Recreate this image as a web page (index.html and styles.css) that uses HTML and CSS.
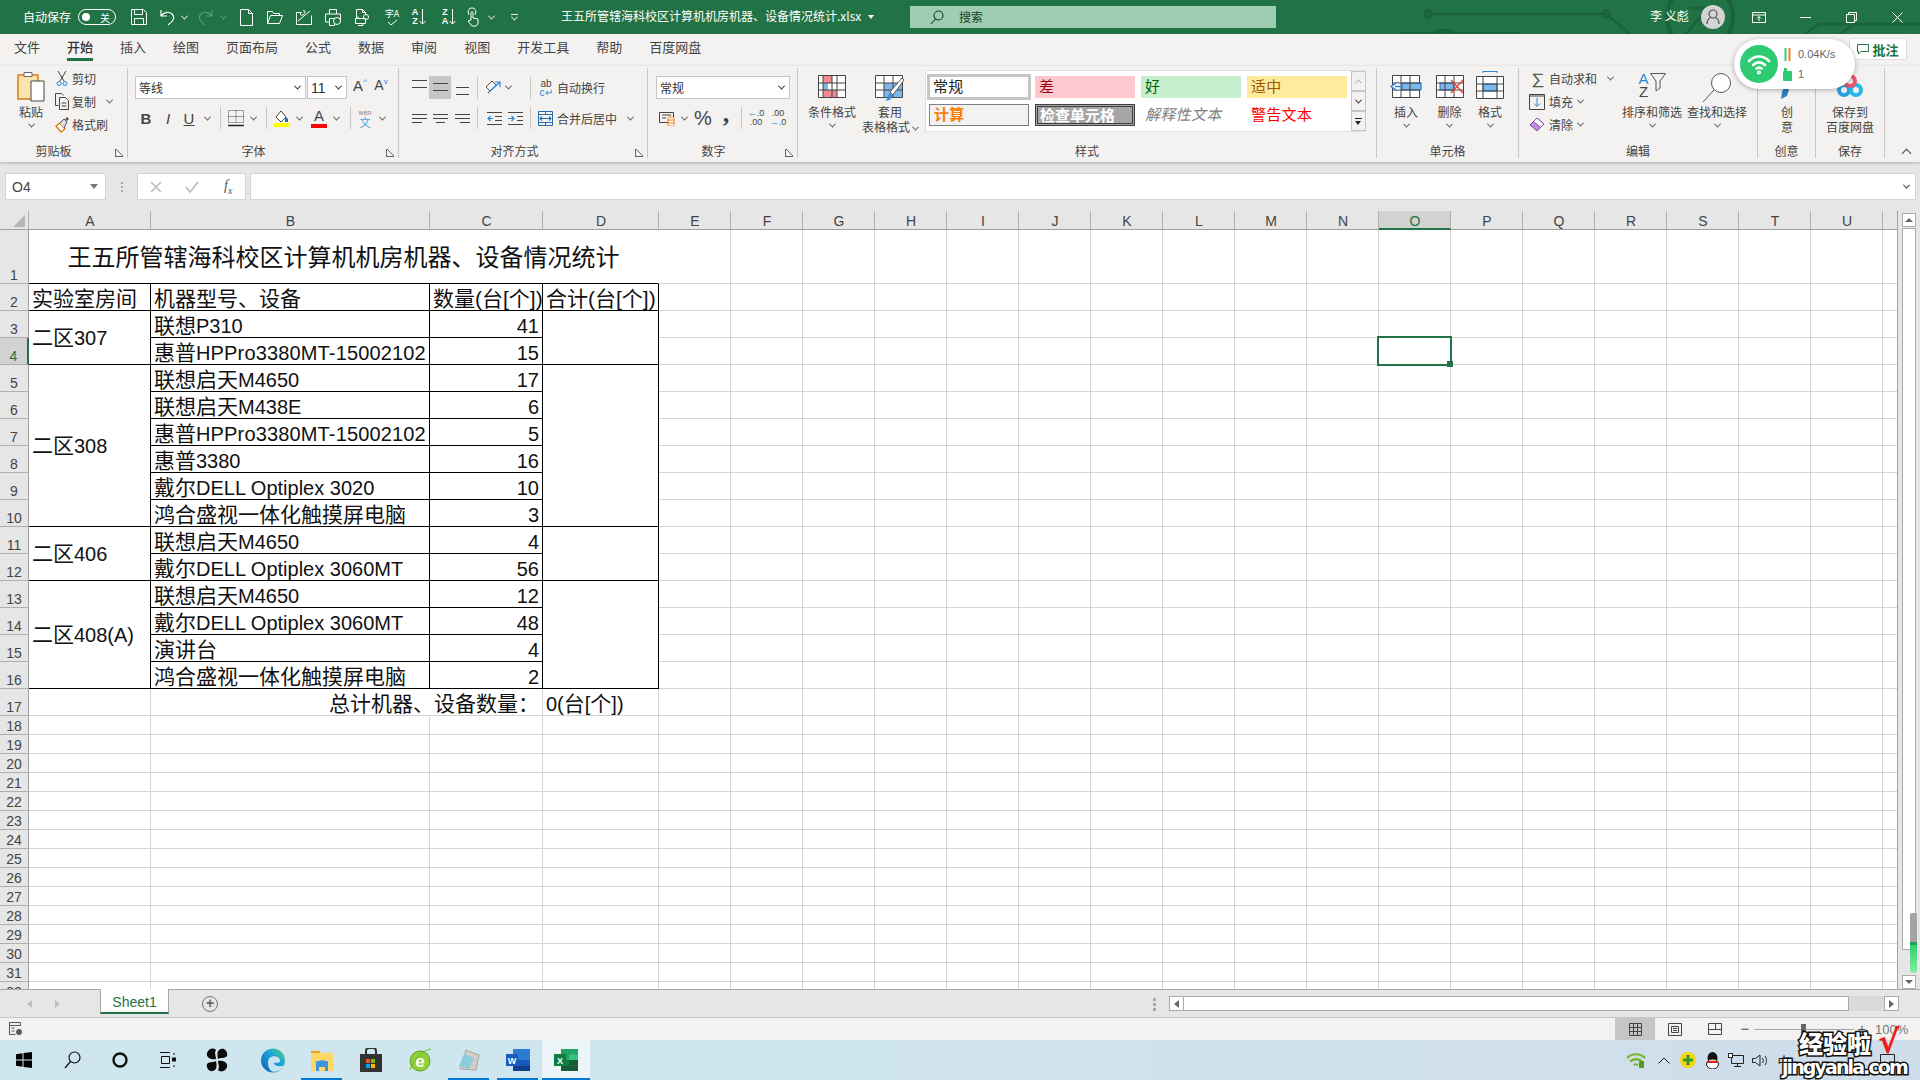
FILE: index.html
```html
<!DOCTYPE html>
<html lang="zh-CN">
<head>
<meta charset="utf-8">
<title>王五所管辖海科校区计算机机房机器、设备情况统计.xlsx - Excel</title>
<link rel="stylesheet" href="styles.css">
</head>
<body>
<div class="app">
<header class="titlebar">
  <svg class="circuit" width="520" height="34" viewBox="0 0 520 34" fill="none" stroke="#1b6239" stroke-width="2.5"><path d="M27 14H206l24 20M0 33H120"/><circle cx="28" cy="14" r="3.5"/><circle cx="206" cy="14" r="3.5"/><circle cx="44" cy="48" r="18"/><circle cx="300" cy="17" r="33" stroke-width="4"/><path d="M290 8h18v18M308 8l-22 26"/><path d="M405 34l14-10h101M440 34l12-8"/></svg>
  <span class="autosave">自动保存</span>
  <span class="toggle"><i class="knob"></i><b>关</b></span>
  <span class="qa ml12 w22"><svg width="16" height="16" viewBox="0 0 16 16" fill="none" stroke="#fff"><path d="M.5.500h12l3 3v12H.5z M3.500.5v5h8v-5M3.500 15.500v-6h9v6"/></svg></span>
  <span class="qa ml7 w22"><svg width="16" height="17" viewBox="0 0 16 17" fill="none" stroke="#fff" stroke-width="1.2"><path d="M1 1v6h6M1 7c3-4 8-5 11-2 3 3 2 7-4 11"/></svg></span>
  <span class="qa w10"><i class="chev light"></i></span>
  <span class="qa ml5 w22 dim"><svg width="16" height="17" viewBox="0 0 16 17" fill="none" stroke="#5f9a7a" stroke-width="1.2"><path d="M15 1v6H9M15 7c-3-4-8-5-11-2-3 3-2 7 4 11"/></svg></span>
  <span class="qa ml2 w10 dim"><i class="chev dimc"></i></span>
  <span class="qa ml7 w22"><svg width="13" height="17" viewBox="0 0 13 17" fill="none" stroke="#fff"><path d="M.5.500h8l4 4v12H.5zM8.500.5v4h4"/></svg></span>
  <span class="qa ml7 w22"><svg width="16" height="13" viewBox="0 0 16 13" fill="none" stroke="#fff"><path d="M.5 12.500V.5h5l1 2h6v2M.5 12.500h12l3-8H3.500z"/></svg></span>
  <span class="qa ml7 w22"><svg width="17" height="15" viewBox="0 0 17 15" fill="none" stroke="#fff"><path d="M.5 2.500h5M.5 2.500v12h15v-9M2 11L14 1M5 2c-2 4 2 4 3 2S10 0 7 1"/></svg></span>
  <span class="qa ml7 w22"><svg width="17" height="17" viewBox="0 0 17 17" fill="none" stroke="#fff"><path d="M4.500 5V.5h7V5M.5 5h15v8h-4M4.500 13H.5V5M4.500 9.500h5v7h-5z"/><circle cx="12" cy="12" r="3.500" fill="#217346"/></svg></span>
  <span class="qa ml7 w22"><svg width="15" height="17" viewBox="0 0 15 17" fill="none" stroke="#fff"><path d="M1.500 9V.5h6l3 3V6M7.500.5v3h3M.5 9.500h10v5H.5zM3 9.500v-2M3 16.500h5v-2"/><circle cx="11" cy="8" r="2.500"/></svg></span>
  <span class="qa ml8 w22 spell"><span class="mini">字A</span><svg width="11" height="7" viewBox="0 0 11 7" fill="none" stroke="#fff"><path d="M1 3l3 3 6-5"/></svg></span>
  <span class="qa ml5 w22 sortq"><span class="az">A<br>Z</span><svg width="7" height="16" viewBox="0 0 7 16" fill="none" stroke="#fff"><path d="M3.500 0v15M.5 12l3 3 3-3"/></svg></span>
  <span class="qa ml8 w22 sortq"><span class="az">Z<br>A</span><svg width="7" height="16" viewBox="0 0 7 16" fill="none" stroke="#fff"><path d="M3.500 0v15M.5 12l3 3 3-3"/></svg></span>
  <span class="qa ml2 w22"><svg width="12" height="20" viewBox="0 0 12 20" fill="none" stroke="#fff"><path d="M2 8C0 3 2 1 5 1s5 2 3 7M4 6c0-2 2-2 2 0v5l5 1v5l-2 2H5l-4-5 3-1z"/></svg></span>
  <span class="qa ml2 w10"><i class="chev light"></i></span>
  <span class="qa ml13 w10 custom"><i class="bar"></i><i class="chev light"></i></span>
  <span class="doc-title">王五所管辖海科校区计算机机房机器、设备情况统计.xlsx</span>
  <span class="caret-wrap"><i class="caret"></i></span>
  <div class="search"><svg width="14" height="15" viewBox="0 0 14 15" fill="none" stroke="#173f2a" stroke-width="1.100"><circle cx="8.500" cy="5.500" r="4.500"/><path d="M5.500 9L1 14"/></svg><span>搜索</span></div>
  <span class="user">李 义彪</span>
  <span class="avatar"><svg width="14" height="16" viewBox="0 0 14 16" fill="none" stroke="#555" stroke-width="1.200"><circle cx="7" cy="5" r="4"/><path d="M1 15c0-4 2.500-6 4-6.500M13 15c0-4-2.500-6-4-6.500"/></svg></span>
  <span class="win first"><svg width="14" height="11" viewBox="0 0 14 11" fill="none" stroke="#fff"><path d="M.5.500h13v10H.5zM.5 3h13M7 9V4.500M5 6.500l2-2 2 2"/></svg></span>
  <span class="win"><svg width="11" height="1" viewBox="0 0 11 1"><path d="M0 .5h11" stroke="#fff"/></svg></span>
  <span class="win"><svg width="11" height="11" viewBox="0 0 11 11" fill="none" stroke="#fff"><path d="M.5 2.500h8v8h-8zM2.500 2.500v-2h8v8h-2"/></svg></span>
  <span class="win"><svg width="11" height="11" viewBox="0 0 11 11" fill="none" stroke="#fff"><path d="M.5.500l10 10M10.500.500l-10 10"/></svg></span>
</header>

<nav class="tabs">
  <span>文件</span><span class="active">开始</span><span>插入</span><span>绘图</span><span>页面布局</span><span>公式</span><span>数据</span><span>审阅</span><span>视图</span><span>开发工具</span><span>帮助</span><span>百度网盘</span>
</nav>

<section class="ribbon">
  <div class="grp g-clip">
    <div class="body clip-body">
      <div class="big w30">
        <div class="big-ic"><svg width="28" height="31" viewBox="0 0 28 31"><path d="M1 4h20v24H1z" fill="#fbe3b0" stroke="#d87b10" stroke-width="1.500"/><path d="M7 1.500h8v4H7z" fill="#fff" stroke="#666"/><path d="M14 10h13v20H14z" fill="#fff" stroke="#444"/></svg></div>
        <span>粘贴</span><i class="chev"></i>
      </div>
      <div class="stack clip-rows">
        <div class="srow"><span class="s-ic"><svg width="12" height="17" viewBox="0 0 12 17" fill="none" stroke="#444"><path d="M2 1l6 10M10 1L4 11"/><circle cx="3" cy="13.500" r="2" stroke="#2b88d8"/><circle cx="9" cy="13.500" r="2" stroke="#2b88d8"/></svg></span><span>剪切</span></div>
        <div class="srow"><span class="s-ic"><svg width="14" height="17" viewBox="0 0 14 17" fill="none" stroke="#444"><path d="M.5.500h6l2 2M.5.500v12h3M4.500 4.500h6l3 3v9h-9zM6.500 10h5M6.500 13h5"/></svg></span><span>复制</span><span class="s-ch"><i class="chev"></i></span></div>
        <div class="srow"><span class="s-ic"><svg width="15" height="17" viewBox="0 0 15 17"><path d="M1 10l5 6 4-3-5-6z" fill="#fff" stroke="#d87b10" stroke-width="1.400"/><path d="M5 7l4-4 3 3-3 6" fill="#ddd" stroke="#555"/><path d="M10 3l2-2 2 2-2 2" fill="#555"/></svg></span><span>格式刷</span></div>
      </div>
    </div>
    <div class="lbl">剪贴板</div><i class="launch"></i>
  </div>

  <div class="grp g-font">
    <div class="body two">
      <div class="row1">
        <div class="combo w171"><span>等线</span><i class="chev dark"></i></div>
        <div class="combo w40 ml1"><span class="latin">11</span><i class="chev dark"></i></div>
        <span class="tb w18 ml4 growa">A<sup>^</sup></span>
        <span class="tb w16 ml4 growb">A<sup>v</sup></span>
      </div>
      <div class="row2">
        <span class="tb w22 fb">B</span><span class="tb w22 fi">I</span><span class="tb w20 fu">U</span><span class="tb w16"><i class="chev"></i></span>
        <i class="sep sx5"></i>
        <span class="tb w20"><svg width="16" height="17" viewBox="0 0 16 17" fill="none"><path d="M.5.500h15v12H.5zM8 .5v12M.5 6.500h15" stroke="#444" stroke-dasharray="1 1"/><path d="M0 15.500h16" stroke="#222" stroke-width="1.500"/></svg></span><span class="tb w14"><i class="chev"></i></span>
        <i class="sep sx6"></i>
        <span class="tb w18"><svg width="16" height="17" viewBox="0 0 16 17"><path d="M7 1L2 7l5 5 5-5z" fill="#fff" stroke="#444"/><path d="M11 6l3 3v3h-3z" fill="#2b6cb0"/><rect y="13" width="16" height="4" fill="#ffff00"/></svg></span><span class="tb w16"><i class="chev"></i></span>
        <span class="tb w16 ml4 fcolor"><span>A</span><i></i></span><span class="tb w18"><i class="chev"></i></span>
        <i class="sep sx5"></i>
        <span class="tb w18 wen"><span>wén</span><b>文</b></span><span class="tb w16"><i class="chev"></i></span>
      </div>
    </div>
    <div class="lbl">字体</div><i class="launch"></i>
  </div>

  <div class="grp g-align">
    <div class="body two">
      <div class="row1">
        <span class="tb w20"><i class="lines top"></i></span>
        <span class="tb w22 hl"><i class="lines mid"></i></span>
        <span class="tb w22"><i class="lines bot"></i></span>
        <i class="sep sl4 sr5"></i>
        <span class="tb w20"><svg width="17" height="17" viewBox="0 0 17 17" fill="none"><path d="M1 8l6-6 4 4-6 6z" stroke="#555"/><path d="M3 14L15 3M10 3h5v5" stroke="#2b88d8" stroke-width="1.200"/></svg></span>
        <span class="tb w10"><i class="chev"></i></span>
        <i class="sep sl17 sr5"></i>
        <span class="tb w20 wrap-ic"><span>ab</span><span class="blue">c↵</span></span>
        <span class="rtext ml1">自动换行</span>
      </div>
      <div class="row2">
        <span class="tb w20"><i class="lines left"></i></span>
        <span class="tb w22"><i class="lines cen"></i></span>
        <span class="tb w22"><i class="lines right"></i></span>
        <i class="sep sl4 sr5"></i>
        <span class="tb w22"><svg width="15" height="13" viewBox="0 0 15 13" fill="none"><path d="M0 .5h15M8 4.500h7M8 8.500h7M0 12.500h15" stroke="#444"/><path d="M6 6.500H1M3.500 4l-2.500 2.500L3.500 9" stroke="#2b88d8" stroke-width="1.200"/></svg></span>
        <span class="tb w21"><svg width="15" height="13" viewBox="0 0 15 13" fill="none"><path d="M0 .5h15M9 4.500h6M9 8.500h6M0 12.500h15" stroke="#444"/><path d="M0 6.500h6M3.500 4L6 6.500 3.500 9" stroke="#2b88d8" stroke-width="1.200"/></svg></span>
        <i class="sep sl4 sr5"></i>
        <span class="tb w18"><svg width="15" height="15" viewBox="0 0 15 15" fill="none" stroke="#2b6cb0"><path d="M.5.500h14v14H.5zM.5 3.500h14M.5 11.500h14M7.500 11.500v3M7.500.5v3"/><path d="M2 7.500h11M4 5.500l-2 2 2 2M11 5.500l2 2-2 2" stroke-width="1.100"/></svg></span>
        <span class="rtext ml3">合并后居中</span>
        <span class="tb w16 ml5"><i class="chev"></i></span>
      </div>
    </div>
    <div class="lbl">对齐方式</div><i class="launch"></i>
  </div>

  <div class="grp g-num">
    <div class="body two">
      <div class="row1"><div class="combo w134"><span>常规</span><i class="chev dark"></i></div></div>
      <div class="row2">
        <span class="tb w22"><svg width="16" height="16" viewBox="0 0 16 16" fill="none"><path d="M.5 2.500h14v10H.5zM3 5h9M3 8h4" stroke="#444"/><rect x="9" y="7" width="6" height="9" rx="1.500" fill="#fff" stroke="#e87a10"/><path d="M9 10h6M9 13h6" stroke="#e87a10"/></svg></span>
        <span class="tb w12"><i class="chev"></i></span>
        <span class="tb w26 pct">%</span>
        <span class="tb w20 comma">,</span>
        <i class="sep sl5"></i>
        <span class="tb w28 dec"><span><em>←</em>.0</span><span>.00</span></span>
        <span class="tb w16 dec"><span>.00</span><span><em>→</em>.0</span></span>
      </div>
    </div>
    <div class="lbl">数字</div><i class="launch"></i>
  </div>

  <div class="grp g-style">
    <div class="body style-body">
      <div class="big w56">
        <div class="big-ic"><svg class="top2" width="28" height="23" viewBox="0 0 28 23"><path d="M.5.500h27v22H.5z" fill="#fff" stroke="#444"/><rect x="5" y="1" width="9" height="7" fill="#f38a8f"/><rect x="5" y="8" width="5" height="7" fill="#7db8e8"/><rect x="5" y="15" width="14" height="7" fill="#f38a8f"/><path d="M5 .5v22M14 .5v22M19 .5v22M.5 8h27M.5 15h27" stroke="#444" fill="none"/></svg></div>
        <span>条件格式</span><i class="chev"></i>
      </div>
      <div class="big w60">
        <div class="big-ic"><svg class="top2" width="30" height="27" viewBox="0 0 30 27"><path d="M.5.500h27v22H.5z" fill="#fff" stroke="#444"/><rect x="9" y="8" width="18" height="14" fill="#7db8e8"/><path d="M9 .5v22M18 .5v22M.5 8h27M.5 15h27" stroke="#444" fill="none"/><path d="M27 3L15 17l3 3L29 5z" fill="#fff" stroke="#555"/><path d="M15 18l3 3-3 4-5 1c3-2 2-6 5-8z" fill="#4a90d9"/></svg></div>
        <span>套用</span><span class="inl">表格格式<i class="chev"></i></span>
      </div>
      <div class="gallery">
        <div class="cells">
          <span class="cs normal">常规</span><span class="cs bad">差</span><span class="cs good">好</span><span class="cs neutral">适中</span>
          <span class="cs calc">计算</span><span class="cs check">检查单元格</span><span class="cs expl">解释性文本</span><span class="cs warn">警告文本</span>
        </div>
        <div class="gscroll"><span class="g1"><i class="chev up grey"></i></span><span class="g2"><i class="chev dark"></i></span><span class="g3"><i class="more"></i></span></div>
      </div>
    </div>
    <div class="lbl">样式</div>
  </div>

  <div class="grp g-cell">
    <div class="body cell-body">
      <div class="big w40">
        <div class="big-ic"><svg class="top2" width="32" height="23" viewBox="0 0 32 23"><path d="M2.500.500h27v22h-27z" fill="#fff" stroke="#444"/><rect x="12" y="8" width="19" height="7" fill="#7db8e8" stroke="#1f6bb0"/><path d="M11 .5v22M20 .5v22M2.500 8H30M2.500 15H30" stroke="#444" fill="none"/><path d="M12 11.500H5M8 7l-7 4.500L8 16" fill="#fff" stroke="#2b88d8" stroke-width="1.300"/></svg></div>
        <span>插入</span><i class="chev"></i>
      </div>
      <div class="big w47">
        <div class="big-ic"><svg class="top2" width="28" height="23" viewBox="0 0 28 23"><path d="M.5.500h27v22H.5z" fill="#fff" stroke="#444"/><rect x="4" y="8" width="14" height="7" fill="#7db8e8" stroke="#1f6bb0"/><path d="M9 .5v22M18 .5v22M.5 8h27M.5 15h27" stroke="#444" fill="none"/><path d="M15 5l12 13M27 5L15 18" stroke="#e8412f" stroke-width="1.300" fill="none"/></svg></div>
        <span>删除</span><i class="chev"></i>
      </div>
      <div class="big w34">
        <div class="big-ic"><svg class="topm2" width="28" height="28" viewBox="0 0 28 28"><path d="M7 .5h14M7 0v2M21 0v2" stroke="#2b88d8" fill="none"/><path d="M.5 5.500h27v22H.5z" fill="#fff" stroke="#444"/><rect x="7" y="13" width="14" height="7" fill="#7db8e8" stroke="#1f6bb0"/><path d="M7 5.500v22M21 5.500v22M.5 13h27M.5 20h27" stroke="#444" fill="none"/></svg></div>
        <span>格式</span><i class="chev"></i>
      </div>
    </div>
    <div class="lbl">单元格</div>
  </div>

  <div class="grp g-edit">
    <div class="body edit-body">
      <div class="stack edit-rows">
        <div class="srow"><span class="s-ic sigma">∑</span><span>自动求和</span><span class="s-ch e1"><i class="chev"></i></span></div>
        <div class="srow"><span class="s-ic"><svg width="16" height="16" viewBox="0 0 16 16" fill="none"><path d="M.5.500h15v15H.5zM.5 2h15" stroke="#444"/><path d="M8 4v8M5 9.500l3 3 3-3" stroke="#2b88d8"/></svg></span><span>填充</span><span class="s-ch e2"><i class="chev"></i></span></div>
        <div class="srow"><span class="s-ic"><svg width="16" height="15" viewBox="0 0 16 15"><path d="M1 8l7-7 7 6-7 7z" fill="#c08ad8" stroke="#8a4aa8"/><path d="M4.500 4.500l7 6 3.500-3.500-7-6z" fill="#fff" stroke="#8a4aa8"/></svg></span><span>清除</span><span class="s-ch e2"><i class="chev"></i></span></div>
      </div>
      <div class="big w58">
        <div class="big-ic sort-ic"><span class="sa">A<br><b>Z</b></span><svg width="16" height="19" viewBox="0 0 16 19" fill="none" stroke="#555"><path d="M.5.500h15L10 8v7l-4 3V8z"/></svg></div>
        <span>排序和筛选</span><i class="chev"></i>
      </div>
      <div class="big w72">
        <div class="big-ic"><svg width="30" height="30" viewBox="0 0 30 30" fill="none" stroke="#555"><circle cx="19" cy="10" r="9.500" fill="#fff"/><path d="M12 17L1 29"/></svg></div>
        <span>查找和选择</span><i class="chev"></i>
      </div>
    </div>
    <div class="lbl">编辑</div>
  </div>

  <div class="grp g-cre">
    <div class="body cc-body">
      <div class="big w58">
        <div class="big-ic"><svg class="pen" width="14" height="30" viewBox="0 0 14 30"><path d="M11 0l3 1-7 24-6 3 1-7z" fill="#2b7fc4"/></svg></div>
        <span>创</span><span>意</span>
      </div>
    </div>
    <div class="lbl">创意</div>
  </div>

  <div class="grp g-save">
    <div class="body cc-body">
      <div class="big w68">
        <div class="big-ic"><svg class="baidu" width="28" height="24" viewBox="0 0 28 24" fill="none" stroke-width="4"><circle cx="8" cy="16" r="5" stroke="#2a9fe0"/><circle cx="20" cy="16" r="5" stroke="#29b6e8"/><circle cx="14" cy="7" r="5" stroke="#ec5570"/></svg></div>
        <span>保存到</span><span>百度网盘</span>
      </div>
    </div>
    <div class="lbl">保存</div>
  </div>
  <i class="collapse"></i>
</section>

<aside class="net-pop">
  <span class="wifi-circle"><svg width="24" height="22" viewBox="0 0 24 22" fill="none" stroke="#fff" stroke-width="2.600" stroke-linecap="round"><path d="M2 8c6-6 14-6 20 0M6 12c4-3.500 8-3.500 12 0M9.500 15.500c2-1.500 3-1.500 5 0"/><circle cx="12" cy="19.500" r=".8"/></svg></span>
  <span class="net-info">
    <span class="ni"><svg width="9" height="13" viewBox="0 0 9 13"><path d="M2.500 0v13" stroke="#2ecb73" stroke-width="2"/><path d="M6.500 0v13" stroke="#f08020" stroke-width="2"/></svg>0.04K/s</span>
    <span class="ni"><svg width="9" height="13" viewBox="0 0 9 13"><rect y="3" width="9" height="10" rx="1" fill="#2ecb73"/><rect x="1" width="3" height="3" fill="#2ecb73"/></svg>1</span>
  </span>
</aside>
<button class="comment"><svg width="12" height="11" viewBox="0 0 12 11" fill="none" stroke="#217346"><path d="M.5.500h11v7H4L1.500 10V7.500h-1z"/></svg>批注</button>

<section class="fbar">
  <div class="namebox"><span>O4</span><i class="tri"></i></div>
  <span class="vdots"><i></i><i></i><i></i></span>
  <div class="fxbox">
    <svg width="12" height="12" viewBox="0 0 12 12" fill="none" stroke="#bdbdbd" stroke-width="1.600"><path d="M1 1l10 10M11 1L1 11"/></svg>
    <svg width="14" height="12" viewBox="0 0 14 12" fill="none" stroke="#bdbdbd" stroke-width="1.800"><path d="M1 6l4 5 8-10"/></svg>
    <span class="fx">f<sub>x</sub></span>
  </div>
  <div class="formula"><i class="chev dark"></i></div>
</section>

<section class="sheet">
  <div class="grid-wrap">
    <div class="col-heads">
      <span class="corner"><i></i></span>
      <span class="ca">A</span><span class="cb">B</span><span class="cc">C</span><span class="cd">D</span>
      <span>E</span><span>F</span><span>G</span><span>H</span><span>I</span><span>J</span><span>K</span><span>L</span><span>M</span><span>N</span><span class="sel">O</span><span>P</span><span>Q</span><span>R</span><span>S</span><span>T</span><span>U</span><span class="cv"></span>
    </div>
    <table class="grid">
      <colgroup><col class="k0"><col class="k1"><col class="k2"><col class="k3"><col class="k4"><col class="k5"></colgroup>
      <tbody>
        <tr class="h54"><th>1</th><td colspan="4" class="title">王五所管辖海科校区计算机机房机器、设备情况统计</td><td class="r"></td></tr>
        <tr><th>2</th><td class="b">实验室房间</td><td class="b">机器型号、设备</td><td class="b">数量(台[个])</td><td class="b">合计(台[个])</td><td class="r"></td></tr>
        <tr><th>3</th><td rowspan="2" class="b m">二区<span class="lt">307</span></td><td class="b">联想<span class="lt">P310</span></td><td class="b n">41</td><td rowspan="2" class="b"></td><td class="r"></td></tr>
        <tr><th class="cur">4</th><td class="b">惠普<span class="lt wide">HPPro3380MT-15002102</span></td><td class="b n">15</td><td class="r"></td></tr>
        <tr><th>5</th><td rowspan="6" class="b m">二区<span class="lt">308</span></td><td class="b">联想启天<span class="lt">M4650</span></td><td class="b n">17</td><td rowspan="6" class="b"></td><td class="r"></td></tr>
        <tr><th>6</th><td class="b">联想启天<span class="lt">M438E</span></td><td class="b n">6</td><td class="r"></td></tr>
        <tr><th>7</th><td class="b">惠普<span class="lt wide">HPPro3380MT-15002102</span></td><td class="b n">5</td><td class="r"></td></tr>
        <tr><th>8</th><td class="b">惠普<span class="lt">3380</span></td><td class="b n">16</td><td class="r"></td></tr>
        <tr><th>9</th><td class="b">戴尔<span class="lt">DELL Optiplex 3020</span></td><td class="b n">10</td><td class="r"></td></tr>
        <tr><th>10</th><td class="b">鸿合盛视一体化触摸屏电脑</td><td class="b n">3</td><td class="r"></td></tr>
        <tr><th>11</th><td rowspan="2" class="b m">二区<span class="lt">406</span></td><td class="b">联想启天<span class="lt">M4650</span></td><td class="b n">4</td><td rowspan="2" class="b"></td><td class="r"></td></tr>
        <tr><th>12</th><td class="b">戴尔<span class="lt">DELL Optiplex 3060MT</span></td><td class="b n">56</td><td class="r"></td></tr>
        <tr><th>13</th><td rowspan="4" class="b m">二区<span class="lt">408(A)</span></td><td class="b">联想启天<span class="lt">M4650</span></td><td class="b n">12</td><td rowspan="4" class="b"></td><td class="r"></td></tr>
        <tr><th>14</th><td class="b">戴尔<span class="lt">DELL Optiplex 3060MT</span></td><td class="b n">48</td><td class="r"></td></tr>
        <tr><th>15</th><td class="b">演讲台</td><td class="b n">4</td><td class="r"></td></tr>
        <tr><th>16</th><td class="b">鸿合盛视一体化触摸屏电脑</td><td class="b n">2</td><td class="r"></td></tr>
        <tr><th>17</th><td></td><td colspan="2" class="total">总计机器、设备数量：</td><td><span class="lt">0(</span>台<span class="lt">[</span>个<span class="lt">])</span></td><td class="r"></td></tr>
        <tr class="h19"><th>18</th><td></td><td></td><td></td><td></td><td class="r"></td></tr>
        <tr class="h19"><th>19</th><td></td><td></td><td></td><td></td><td class="r"></td></tr>
        <tr class="h19"><th>20</th><td></td><td></td><td></td><td></td><td class="r"></td></tr>
        <tr class="h19"><th>21</th><td></td><td></td><td></td><td></td><td class="r"></td></tr>
        <tr class="h19"><th>22</th><td></td><td></td><td></td><td></td><td class="r"></td></tr>
        <tr class="h19"><th>23</th><td></td><td></td><td></td><td></td><td class="r"></td></tr>
        <tr class="h19"><th>24</th><td></td><td></td><td></td><td></td><td class="r"></td></tr>
        <tr class="h19"><th>25</th><td></td><td></td><td></td><td></td><td class="r"></td></tr>
        <tr class="h19"><th>26</th><td></td><td></td><td></td><td></td><td class="r"></td></tr>
        <tr class="h19"><th>27</th><td></td><td></td><td></td><td></td><td class="r"></td></tr>
        <tr class="h19"><th>28</th><td></td><td></td><td></td><td></td><td class="r"></td></tr>
        <tr class="h19"><th>29</th><td></td><td></td><td></td><td></td><td class="r"></td></tr>
        <tr class="h19"><th>30</th><td></td><td></td><td></td><td></td><td class="r"></td></tr>
        <tr class="h19"><th>31</th><td></td><td></td><td></td><td></td><td class="r"></td></tr>
        <tr class="h19"><th>32</th><td></td><td></td><td></td><td></td><td class="r"></td></tr>
      </tbody>
    </table>
    <div class="cursor"><i></i></div>
  </div>
  <div class="vscroll">
    <span class="sbtn"><i class="tri-up"></i></span>
    <div class="vtrack"><div class="vthumb"></div></div>
    <span class="sbtn"><i class="tri-down"></i></span>
    <i class="meter"></i>
  </div>
</section>

<section class="tabbar">
  <span class="nav"><i class="tl"></i></span><span class="nav n2"><i class="tr"></i></span>
  <span class="sheet-tab">Sheet1</span>
  <span class="add">+</span>
  <span class="split"><i></i><i></i><i></i></span>
  <div class="hscroll">
    <span class="hbtn"><i class="tl dark"></i></span>
    <div class="hthumb"></div>
    <span class="hbtn last"><i class="tr dark"></i></span>
  </div>
</section>

<footer class="status">
  <svg class="macro" width="14" height="14" viewBox="0 0 14 14" fill="none" stroke="#555"><path d="M.5.500h11v3H.5zM.5 3.500v9h6M2.500 6h3M2.500 9h3"/><circle cx="10" cy="10" r="3.500" fill="#555" stroke="#f3f2f1"/></svg>
  <span class="view on"><svg width="13" height="13" viewBox="0 0 13 13" fill="none" stroke="#444"><path d="M.5.500h12v12H.5zM4.500.5v12M8.500.5v12M.5 4.500h12M.5 8.500h12"/></svg></span>
  <span class="view"><svg width="14" height="13" viewBox="0 0 14 13" fill="none" stroke="#444"><path d="M.5.500h13v12H.5zM3.500 3.500h7v6h-7zM5 5.500h4M5 7.500h4"/></svg></span>
  <span class="view"><svg width="14" height="12" viewBox="0 0 14 12" fill="none" stroke="#444"><path d="M.5.500h13v11H.5zM7.500.5v6h-7M7.500 6.500h6"/></svg></span>
  <span class="zm">−</span>
  <span class="slider"><i></i></span>
  <span class="zm">+</span>
  <span class="pctz">100%</span>
</footer>

<div class="taskbar">
  <span class="tk"><svg width="16" height="16" viewBox="0 0 16 16" fill="#000"><path d="M0 2.200l6.500-1v6.300H0zM7.500 1L16 0v7.500H7.500zM0 8.500h6.500v6.300l-6.500-1zM7.500 8.500H16V16l-8.500-1.100z"/></svg></span>
  <span class="tk"><svg width="17" height="18" viewBox="0 0 17 18" fill="none" stroke="#111" stroke-width="1.200"><circle cx="10.500" cy="6.500" r="5.500"/><path d="M6.500 10.500L1 17"/></svg></span>
  <span class="tk"><svg width="16" height="16" viewBox="0 0 16 16" fill="none" stroke="#111" stroke-width="2.400"><circle cx="8" cy="8" r="6.500"/></svg></span>
  <span class="tk"><svg width="16" height="16" viewBox="0 0 16 16" fill="none" stroke="#111"><path d="M0 .5h10M0 15.500h10M1.500 4.500h8v7h-8zM14 1v2M14 13v2"/><rect x="12.500" y="6" width="3" height="3" fill="#111"/></svg></span>
  <span class="tk w50"><svg width="22" height="25" viewBox="0 0 22 25" fill="#0c0c0c"><path d="M10 11C4 12 0 9 1 5c1-4 6-6 9-3-2 3 0 6 0 9zM12 11c-1-5-1-9 3-10 4-1 7 3 6 7-3 3-6 1-9 3zM12 13c6-1 10 2 9 6-1 4-6 6-9 3 2-3 0-6 0-9zM10 13c1 5 1 9-3 10-4 1-7-3-6-7 3-3 6-1 9-3z"/></svg></span>
  <span class="tk ml6"><svg width="24" height="29" viewBox="0 0 24 24"><defs><linearGradient id="eg" x1="0" y1="1" x2="1" y2="0"><stop offset="0" stop-color="#0b5fb8"/><stop offset=".6" stop-color="#1ea2de"/><stop offset="1" stop-color="#5ed66a"/></linearGradient></defs><circle cx="12" cy="12" r="12" fill="url(#eg)"/><path d="M7 14c0-5 4-7 8-6 4 1 5 5 3 6-2 1-5 0-5 0 0 3 4 5 10 3-3 6-9 7-12 6-3-2-4-5-4-9z" fill="#d0e8f1" opacity=".95"/></svg></span>
  <span class="tk w49 run"><svg width="22" height="21" viewBox="0 0 22 21"><path d="M0 1h8l2 2h12v18H0z" fill="#ffd767"/><path d="M0 1h8l2 2H0z" fill="#e8a317"/><path d="M5 12h12v9h-3v-4H8v4H5z" fill="#3a96dd"/><path d="M3 12l8-2 8 2z" fill="#3a96dd"/></svg></span>
  <span class="tk w49"><svg width="22" height="24" viewBox="0 0 22 24"><rect y="6" width="22" height="18" fill="#333"/><path d="M6 8V3a3 3 0 013-3h4a3 3 0 013 3v5" fill="none" stroke="#333" stroke-width="2"/><rect x="6" y="11" width="4" height="4" fill="#f25022"/><rect x="11" y="11" width="4" height="4" fill="#7fba00"/><rect x="6" y="16" width="4" height="4" fill="#00a4ef"/><rect x="11" y="16" width="4" height="4" fill="#ffb900"/></svg></span>
  <span class="tk w49"><svg width="24" height="24" viewBox="0 0 24 24"><circle cx="12" cy="13" r="10" fill="#8ed03a" stroke="#5fa820"/><text x="12" y="19" text-anchor="middle" class="tk-e">e</text><path d="M2 22C4 14 14 2 23 1" fill="none" stroke="#6dbb22"/></svg></span>
  <span class="tk w49 run"><svg width="22" height="23" viewBox="0 0 22 23"><path d="M8 1l13 5-3 15L2 20z" fill="#cfcfc8" stroke="#a8a8a0"/><path d="M6 5l10 4-5 11-10-3z" fill="#8ccbdc"/></svg></span>
  <span class="tk w49 run"><svg width="24" height="22" viewBox="0 0 24 22"><rect x="7" width="17" height="22" fill="#2b7cd3"/><rect x="7" y="11" width="17" height="5.500" fill="#185abd"/><rect x="7" y="16.500" width="17" height="5.500" fill="#103f91"/><rect y="5" width="12" height="12" fill="#185abd"/><text x="6" y="15" text-anchor="middle" class="tk-l">W</text></svg></span>
  <span class="tk act"><svg width="24" height="22" viewBox="0 0 24 22"><rect x="7" width="17" height="22" fill="#21a366"/><rect x="15" y="5.500" width="9" height="5.500" fill="#33c481"/><rect x="7" y="11" width="8" height="5.500" fill="#107c41"/><rect x="15" y="11" width="9" height="5.500" fill="#185c37"/><rect x="7" y="16.500" width="17" height="5.500" fill="#185c37"/><rect y="5" width="12" height="12" fill="#107c41"/><text x="6" y="15" text-anchor="middle" class="tk-l">X</text></svg></span>
  <div class="tray">
    <span class="ti wifi-t"><svg width="20" height="16" viewBox="0 0 20 16" fill="none" stroke="#79b82e" stroke-width="2.200"><path d="M1 6c5-5 13-5 18 0M4 9.500c4-3 8-3 12 0M8 13c1-1 2-1 4 0"/><rect x="13" y="9" width="5" height="7" rx="1" fill="#4f9a1e" stroke="none"/></svg></span>
    <span class="ti"><svg width="12" height="7" viewBox="0 0 12 7" fill="none" stroke="#222"><path d="M.5 6.500L6 1l5.500 5.500"/></svg></span>
    <span class="ti"><svg width="16" height="16" viewBox="0 0 16 16"><circle cx="8" cy="8" r="8" fill="#f5d515"/><path d="M8 3v10M3 8h10" stroke="#2f9a2a" stroke-width="3"/></svg></span>
    <span class="ti"><svg width="15" height="17" viewBox="0 0 15 17"><ellipse cx="7.500" cy="6" rx="5" ry="6" fill="#111"/><ellipse cx="7.500" cy="12" rx="6" ry="5" fill="#fff" stroke="#111"/><path d="M2 9h11v2H2z" fill="#e02020"/><path d="M5.500 8h4l-2 1.500z" fill="#f5b015"/></svg></span>
    <span class="ti"><svg width="16" height="14" viewBox="0 0 16 14" fill="none" stroke="#222"><path d="M3.500 2.500h12v8h-12zM9.500 10.500v3M6 13.500h7"/><rect x=".5" y=".5" width="4" height="4" fill="#fff"/></svg></span>
    <span class="ti"><svg width="16" height="13" viewBox="0 0 16 13" fill="none" stroke="#222"><path d="M.5 4.500h3L8 1v11L3.500 8.500h-3zM10.500 4c1 1.500 1 3.500 0 5M13 2c2 3 2 6 0 9"/></svg></span>
    <span class="ti ime">中</span>
    <span class="clock">2020/11/8</span>
    <span class="notif"><svg width="15" height="13" viewBox="0 0 15 13" fill="none" stroke="#222"><path d="M.5.500h14v9h-6l-2 3v-3h-6z"/></svg></span>
  </div>
</div>

<div class="watermark"><span class="wm-cn">经验啦</span><span class="wm-ok">√</span><span class="wm-en">jingyanla.com</span></div>
</div>
</body>
</html>
```

FILE: styles.css
```css
*{box-sizing:border-box}
html,body{margin:0;padding:0;overflow:hidden}
body{font-family:"Noto Sans CJK SC","Noto Sans",sans-serif;color:#444;font-size:12px;background:#f3f2f1}
i{font-style:normal}
.app{position:relative;width:1920px;height:1080px;overflow:hidden;display:flex;flex-direction:column}

/* title bar */
.titlebar{position:relative;height:34px;background:#217346;color:#fff;display:flex;align-items:center;padding-left:23px;flex:none}
.circuit{position:absolute;right:0;top:0}
.titlebar>*:not(.circuit){position:relative}
.autosave{width:48px;font-size:12px;white-space:nowrap;padding-bottom:2px}
.toggle{margin-left:7px;width:38px;height:16px;border:1px solid #fff;border-radius:8px;display:flex;align-items:center;justify-content:space-between;padding:0 5px 0 3px}
.toggle b{font-weight:400;font-size:10px}
.knob{width:8px;height:8px;border-radius:50%;background:#fff}
.qa{height:22px;display:inline-flex;align-items:center;justify-content:center;flex:none}
.ml1{margin-left:1px}.ml2{margin-left:2px}.ml3{margin-left:3px}.ml4{margin-left:4px}.ml5{margin-left:5px}.ml6{margin-left:6px}.ml7{margin-left:7px}.ml8{margin-left:8px}.ml12{margin-left:12px}.ml13{margin-left:13px}
.w10{width:10px}.w12{width:12px}.w14{width:14px}.w16{width:16px}.w18{width:18px}.w20{width:20px}.w21{width:21px}.w22{width:22px}.w26{width:26px}.w28{width:28px}.w30{width:30px}.w34{width:34px}.w40{width:40px}.w47{width:47px}.w49{width:49px}.w50{width:50px}.w56{width:56px}.w58{width:58px}.w60{width:60px}.w68{width:68px}.w72{width:72px}.w134{width:134px}.w171{width:171px}
.chev{display:inline-block;width:5px;height:5px;border-right:1px solid #555;border-bottom:1px solid #555;transform:rotate(45deg) translate(-1px,-1px)}
.chev.light{border-color:#dfeee6}.chev.dimc{border-color:#5f9a7a}.chev.dark{border-color:#222}
.chev.up{transform:rotate(225deg) translate(-1px,-1px)}.chev.grey{border-color:#aaa}
.spell{flex-direction:column;line-height:1}
.mini{font-size:9px;line-height:10px}
.sortq{gap:1px}
.az{font:700 9px/9px "Liberation Sans",sans-serif;text-align:center}
.custom{flex-direction:column;gap:1px}
.custom .bar{width:7px;height:1px;background:#dfeee6}
.doc-title{margin-left:42px;width:300px;white-space:nowrap;font-size:12px;flex:none;padding-bottom:3px}
.caret-wrap{width:20px;display:flex;justify-content:center;flex:none}
.caret{width:0;height:0;border:3px solid transparent;border-top:4px solid #fff;border-bottom:0}
.search{margin-left:29px;width:366px;height:22px;background:#9fcdb3;display:flex;align-items:center;padding-left:20px;color:#173f2a;font-size:12px;flex:none}
.search span{margin-left:15px;padding-bottom:2px}
.user{margin-left:auto;width:40px;white-space:nowrap;font-size:12px;padding-bottom:3px}
.avatar{margin-left:11px;width:24px;height:24px;border-radius:50%;background:#d4d4d4;display:flex;align-items:center;justify-content:center}
.win{width:46px;height:34px;display:flex;align-items:center;justify-content:center;flex:none}
.win.first{margin-left:11px}

/* tabs */
.tabs{height:32px;flex:none;display:flex;gap:27px;padding:0 0 6px 14px;align-items:center;font-size:13px;background:#f3f2f1;color:#444}
.tabs span{position:relative;line-height:26px}
.tabs .active{font-weight:500;color:#333}
.tabs .active::after{content:"";position:absolute;left:0;right:0;bottom:-1px;height:3px;background:#217346}

/* ribbon */
.ribbon{position:relative;height:96px;flex:none;display:flex;padding-top:2px;background:#f3f2f1;box-shadow:0 1px 3px rgba(0,0,0,.25);z-index:2}
.grp{position:relative;height:90px;border-right:1px solid #c8c6c4;display:flex;flex-direction:column;flex:none}
.body{height:76px;display:flex}
.lbl{height:14px;line-height:14px;text-align:center;font-size:12px;color:#444;white-space:nowrap}
.g-clip .lbl{padding-right:20px}.g-font .lbl{padding-right:19px}.g-align .lbl{padding-right:17px}.g-num .lbl{padding-right:18px}
.launch{position:absolute;right:4px;bottom:1px;width:8px;height:8px;border-left:1px solid #666;border-bottom:1px solid #666;background:linear-gradient(45deg,transparent 45%,#666 45% 55%,transparent 55%)}
.g-clip{width:128px}.g-font{width:271px}.g-align{width:249px}.g-num{width:150px}.g-style{width:579px}.g-cell{width:142px}.g-edit{width:239px}.g-cre{width:58px}.g-save{width:69px}
.big{display:flex;flex-direction:column;align-items:center;line-height:15px;flex:none;white-space:nowrap;font-size:12px}
.big-ic{height:31px;flex:none;display:flex;justify-content:center;margin-top:5px}
.big .chev{margin-top:4px}
.top2{margin-top:2px}.topm2{margin-top:-2px}
.inl{display:flex;gap:3px;align-items:center}
.stack{display:flex;flex-direction:column}
.srow{height:23px;display:flex;align-items:center;white-space:nowrap}
.s-ic{display:inline-flex;align-items:center;justify-content:center;flex:none}
.clip-body{padding-left:16px}
.clip-body .big .big-ic{margin-top:3px;height:33px}
.clip-rows{margin-left:7px;margin-top:-1px}
.clip-rows .s-ic{width:18px;margin-right:1px}
.s-ch{margin-left:9px;display:inline-flex;width:8px;justify-content:center}
.two{display:flex;flex-direction:column;padding-top:8px}
.row1,.row2{display:flex;align-items:center;flex:none}
.row1{height:23px}
.row2{height:22px;margin-top:8px}
.g-font .two{padding-left:7px}
.g-align .two{padding-left:10px}
.g-num .two{padding-left:8px}
.tb{height:22px;display:inline-flex;align-items:center;justify-content:center;flex:none;color:#444}
.combo{height:23px;background:#fff;border:1px solid #c8c6c4;display:flex;align-items:center;justify-content:space-between;padding:0 5px 0 3px;color:#333;flex:none;font-size:12px}
.latin{font-family:"Liberation Sans",sans-serif;font-size:14px}
.growa,.growb{font:15px "Liberation Sans",sans-serif;align-items:flex-start}
.growb{font-size:14px}
.growa sup,.growb sup{font-size:8px;color:#2b88d8;line-height:10px}
.fb,.fi,.fu{font:15px "Liberation Sans",sans-serif}
.fb{font-weight:700}.fi{font-style:italic}.fu{text-decoration:underline}
.sep{width:1px;height:22px;background:#c8c6c4;flex:none}
.sx5{margin:0 5px}.sx6{margin:0 6px}
.sl4{margin-left:4px}.sr5{margin-right:5px}.sl5{margin-left:5px}.sl17{margin-left:17px}
.fcolor{flex-direction:column;font:15px/13px "Liberation Sans",sans-serif}
.fcolor i{width:16px;height:4px;background:#f00;margin-top:2px}
.wen{flex-direction:column;line-height:9px;color:#888}
.wen span{font:7px/8px "Liberation Sans",sans-serif}
.wen b{font-weight:400;font-size:11px;line-height:11px;color:#4a9ed8}
.lines{display:block;width:15px;height:1px;position:relative;background:#444}
.lines::before,.lines::after{content:"";position:absolute;height:1px;background:#444;left:0;width:15px}
.lines.top{transform:translateY(-7px)}.lines.top::before{display:none}.lines.top::after{top:7px}
.lines.mid{transform:translateY(-4px)}.lines.mid::before{display:none}.lines.mid::after{top:7px}
.lines.bot{width:13px;transform:translateY(0)}.lines.bot::before{display:none}.lines.bot::after{top:7px;width:13px}
.lines.left::before{top:-4px}.lines.left::after{top:4px;width:10px}
.lines.cen::before{top:-4px}.lines.cen::after{top:4px;left:3px;width:9px}
.lines.right::before{top:-4px}.lines.right::after{top:4px;left:5px;width:10px}
.hl{background:#c8c6c4;height:23px}
.rtext{font-size:12px;white-space:nowrap;flex:none}
.wrap-ic{flex-direction:column;font:10px/9px "Liberation Sans",sans-serif}
.blue{color:#2b88d8}
.pct{font:20px "Liberation Sans",sans-serif}
.comma{font:700 26px/14px "Liberation Serif",serif;align-items:flex-start}
.dec{flex-direction:column;font:9px/9px "Liberation Sans",sans-serif;align-items:center;white-space:nowrap}
.dec em{font-style:normal;color:#2b88d8;font-weight:700}
.style-body{padding-left:6px}
.gallery{margin-left:5px;margin-top:2px;width:441px;height:62px;display:flex;flex:none;background:#fff;border:1px solid #e1dfdd}
.cells{width:426px;display:grid;grid-template-columns:repeat(4,100px);grid-auto-rows:22px;column-gap:6px;row-gap:6px;padding:5px 0 0 3px;flex:none}
.cs{display:flex;align-items:center;padding:0 0 3px 4px;font-size:15px;white-space:nowrap;letter-spacing:.3px;overflow:hidden}
.normal{outline:3px solid #c8c6c4;outline-offset:-1px;color:#222}
.bad{background:#ffc7ce;color:#9c0006}
.good{background:#c6efce;color:#006100}
.neutral{background:#ffeb9c;color:#9c5700}
.calc{background:#f2f2f2;border:1px solid #7f7f7f;color:#fa7d00;font-weight:700}
.check{background:#a5a5a5;border:3px double #3f3f3f;color:#fff;font-weight:700;padding-left:2px;padding-bottom:1px;letter-spacing:0}
.expl{color:#7f7f7f;font-style:italic}
.warn{color:#f00}
.gscroll{width:15px;display:flex;flex-direction:column;flex:none;margin-left:-1px}
.gscroll span{flex:1;border:1px solid #c8c6c4;background:#f3f2f1;display:flex;align-items:center;justify-content:center}
.more{width:7px;height:6px;border-top:1px solid #222;position:relative}
.more::after{content:"";position:absolute;left:0;top:2px;border:3.500px solid transparent;border-top:4px solid #222;border-bottom:0}
.cell-body{padding-left:9px}
.edit-body{padding-left:10px}
.edit-rows{width:94px;flex:none;margin-top:-1px}
.edit-rows .s-ic{width:20px;justify-content:flex-start}
.sigma{font-size:18px;line-height:18px;color:#555}
.e1{margin-left:9px}.e2{margin-left:3px}
.sort-ic{gap:1px}
.sa{font:15px/13px "Liberation Sans",sans-serif;color:#2b88d8;text-align:center;margin-top:-1px}
.sa b{font-weight:400;color:#444}
.pen{margin-top:-2px}
.baidu{margin-top:1px}
.collapse{position:absolute;right:10px;bottom:5px;width:7px;height:7px;border-left:1px solid #444;border-top:1px solid #444;transform:rotate(45deg)}

/* floating */
.net-pop{position:absolute;z-index:5;left:1734px;top:39px;width:121px;height:50px;border-radius:25px;background:#fff;box-shadow:0 1px 5px rgba(0,0,0,.3);display:flex;align-items:center;padding-left:6px}
.wifi-circle{width:38px;height:38px;border-radius:50%;background:#2ecb73;display:flex;align-items:center;justify-content:center;flex:none}
.net-info{margin-left:5px;display:flex;flex-direction:column;gap:4px}
.ni{display:flex;align-items:center;gap:6px;font:11px/16px "Liberation Sans",sans-serif;color:#666}
.comment{position:absolute;z-index:4;left:1849px;top:38px;width:58px;height:22px;border:1px solid #e1dfdd;background:#fff;border-radius:2px;color:#217346;font:700 13px "Noto Sans CJK SC",sans-serif;display:flex;align-items:center;justify-content:center;gap:3px;padding:0}

/* formula bar */
.fbar{height:49px;flex:none;background:#e6e6e6;display:flex;padding:11px 4px 0 5px;align-items:flex-start}
.namebox,.fxbox,.formula{height:27px;background:#fff;border:1px solid #d4d4d4;display:flex;align-items:center;flex:none}
.namebox{width:101px;justify-content:space-between;padding:0 7px 0 6px;font:14px "Liberation Sans",sans-serif;color:#444}
.tri{border:4px solid transparent;border-top:5px solid #777;border-bottom:0}
.vdots{width:31px;display:flex;flex-direction:column;align-items:center;gap:2px;height:27px;justify-content:center}
.vdots i{width:2px;height:2px;background:#aaa}
.fxbox{width:109px;padding-left:12px;gap:23px}
.fx{font:italic 14px "Liberation Serif",serif;color:#555;margin-left:2px}
.fx sub{font-size:10px}
.formula{margin-left:4px;width:1666px;justify-content:flex-end;padding-right:6px}

/* sheet */
.sheet{position:relative;height:779px;flex:none;display:flex;background:#e6e6e6;overflow:hidden;border-bottom:1px solid #a6a6a6}
.grid-wrap{position:relative;width:1898px;height:778px;overflow:hidden;flex:none;background:#fff;border-right:1px solid #a0a0a0}
.col-heads{height:19px;display:flex;background:#e6e6e6;border-bottom:1px solid #a0a0a0}
.col-heads span{width:72px;flex:none;border-right:1px solid #b0b0b0;text-align:center;font:14px/21px "Liberation Sans",sans-serif;color:#444;overflow:hidden;padding-left:1px}
.col-heads .corner{width:29px;position:relative;border-right:1px solid #b0b0b0}
.corner i{position:absolute;right:3px;bottom:2px;border-style:solid;border-width:0 0 12px 12px;border-color:transparent transparent #b5b5b5 transparent}
.col-heads .ca{width:122px}.col-heads .cb{width:279px}.col-heads .cc{width:113px}.col-heads .cd{width:116px}
.col-heads .cv{width:15px;border:0}
.col-heads .sel{background:#d2d2d2;color:#217346;border-bottom:2px solid #217346;height:19px}
.grid{border-collapse:separate;border-spacing:0;table-layout:fixed;width:1898px;font:21px/22px "Liberation Sans","Noto Sans CJK SC",sans-serif;color:#111}
.k0{width:29px}.k1{width:122px}.k2{width:279px}.k3{width:113px}.k4{width:116px}.k5{width:1239px}
.grid tr{height:27px}
.grid tr.h54{height:54px}
.grid tr.h19{height:19px}
.grid th{background:#e6e6e6;border-right:1px solid #a0a0a0;border-bottom:1px solid #b0b0b0;font:400 14px/15px "Liberation Sans",sans-serif;color:#444;padding:0;vertical-align:bottom;text-align:center}
.grid th.cur{background:#d2d2d2;color:#217346;border-right:2px solid #217346}
.grid td{padding:0 3px;border-right:1px solid #d4d4d4;border-bottom:1px solid #d4d4d4;white-space:nowrap;overflow:hidden;vertical-align:bottom;line-height:22px}
.grid .lt{font-size:20px}
.grid .wide{letter-spacing:.15px}
.grid tr.h19 td{line-height:1px;font-size:1px}
.grid td.b{border-right-color:#000;border-bottom-color:#000}
.grid td.m{vertical-align:middle}
.grid td.n{text-align:right;font-size:20px}
.grid td.title{font-size:24px;line-height:30px;text-align:center;vertical-align:middle;border-right-color:transparent;border-bottom-color:#000;padding-top:2px}
.grid td.total{text-align:right;padding-right:3px}
.grid td.r{padding:0;border-right:0;background:repeating-linear-gradient(90deg,transparent 0 71px,#d4d4d4 71px 72px)}
.cursor{position:absolute;left:1377px;top:125px;width:75px;height:30px;border:2px solid #217346}
.cursor i{position:absolute;right:-3px;bottom:-3px;width:6px;height:6px;background:#217346}
.vscroll{position:relative;width:22px;flex:none;display:flex;flex-direction:column;align-items:center;padding-top:2px}
.sbtn{width:14px;height:14px;background:#fff;border:1px solid #ababab;display:flex;align-items:center;justify-content:center;flex:none}
.tri-up{border:4px solid transparent;border-bottom:4px solid #666;border-top:0}
.tri-down{border:4px solid transparent;border-top:4px solid #666;border-bottom:0}
.vtrack{flex:1;width:14px}
.vthumb{width:14px;height:722px;margin-top:1px;background:#fff;border:1px solid #ababab;border-top-width:1px}
.meter{position:absolute;left:12px;top:702px;width:7px;height:60px;border-radius:2px 2px 4px 4px;background:linear-gradient(#a4a4a4 0 29px,#1fa35a 29px 32px,#2fd06f 32px,#84eda6)}

/* tab bar */
.tabbar{position:relative;height:28px;flex:none;background:#e6e6e6;border-bottom:1px solid #c8c6c4;display:flex}
.nav{width:28px;height:27px;display:flex;align-items:center;justify-content:center;margin-left:15px}
.nav.n2{margin-left:0}
.tl{border:4px solid transparent;border-right:5px solid #bdbdbd;border-left:0}
.tr{border:4px solid transparent;border-left:5px solid #bdbdbd;border-right:0}
.tl.dark{border-right-color:#666}.tr.dark{border-left-color:#666}
.sheet-tab{margin-left:29px;width:69px;height:25px;margin-top:-1px;background:#fff;border:1px solid #a6a6a6;border-top:0;border-bottom:2px solid #217346;color:#217346;font:14px/26px "Liberation Sans",sans-serif;text-align:center;position:relative}
.add{margin-left:33px;width:16px;height:16px;margin-top:6px;border:1px solid #777;border-radius:50%;font:700 14px/13px "Liberation Sans",sans-serif;text-align:center;color:#666}
.split{margin-left:935px;width:4px;display:flex;flex-direction:column;gap:2px;margin-top:8px}
.split i{width:3px;height:3px;background:#aaa}
.hscroll{margin-left:12px;width:730px;height:15px;margin-top:6px;display:flex;background:#dadada}
.hbtn{width:15px;height:15px;background:#fff;border:1px solid #ababab;display:flex;align-items:center;justify-content:center;flex:none}
.hbtn.last{margin-left:auto}
.hthumb{width:665px;background:#fff;border:1px solid #ababab;border-left:0;flex:none}

/* status bar */
.status{height:22px;flex:none;background:#f3f2f1;display:flex;align-items:center;padding-left:9px}
.macro{flex:none}
.view{width:40px;height:22px;display:flex;align-items:center;justify-content:center;flex:none}
.view.on{margin-left:1592px;background:#c8c6c4}
.zm{width:12px;margin-left:4px;text-align:center;font:15px/20px "Liberation Sans",sans-serif;color:#555}
.slider{position:relative;margin-left:3px;width:100px;height:1px;background:#a6a6a6;flex:none}
.slider i{position:absolute;left:47px;top:-5px;width:5px;height:10px;background:#666}
.slider + .zm{margin-left:2px}
.pctz{margin-left:7px;width:40px;font:13px "Liberation Sans",sans-serif;color:#777;white-space:nowrap}

/* taskbar */
.taskbar{height:40px;flex:none;display:flex;background:linear-gradient(90deg,#cfe6ee 0,#cfe6ee 40%,#cfdcea 100%)}
.tk{position:relative;width:48px;height:40px;display:flex;align-items:center;justify-content:center;flex:none}
.tk.w50{width:50px}.tk.w49{width:49px}
.tk.ml6{margin-left:6px;width:49px}
.run::after{content:"";position:absolute;left:4px;right:4px;bottom:0;height:2px;background:#0078d4}
.act{background:rgba(255,255,255,.6)}
.act::after{content:"";position:absolute;left:0;right:0;bottom:0;height:2px;background:#0078d4}
.tk-l{font:700 9px "Liberation Sans",sans-serif;fill:#fff}
.tk-e{font:700 17px "Liberation Sans",sans-serif;fill:#fff}
.tray{margin-left:auto;display:flex;align-items:center;padding-right:16px}
.ti{width:24px;display:flex;justify-content:center;align-items:center;flex:none}
.wifi-t{margin-right:4px}
.ime{font-size:13px;color:#222}
.clock{width:74px;text-align:center;font:12px/14px "Liberation Sans",sans-serif;color:#222;margin-top:22px}
.notif{width:34px;display:flex;justify-content:center}

/* watermark */
.watermark{position:absolute;z-index:6;left:1782px;top:1028px;width:130px;height:52px}
.wm-cn,.wm-en,.wm-ok{position:absolute;white-space:nowrap}
.wm-cn{left:17px;top:0;font:900 24px/30px "Noto Sans CJK SC",sans-serif;color:#fff;-webkit-text-stroke:3px #111;paint-order:stroke fill}
.wm-en{left:0;top:27px;font:700 19px/24px "DejaVu Sans",sans-serif;color:#fff;-webkit-text-stroke:3px #111;paint-order:stroke fill;letter-spacing:-1.900px}
.wm-ok{left:96px;top:-4px;font:700 32px/36px "DejaVu Sans",sans-serif;color:#f01818}
```
